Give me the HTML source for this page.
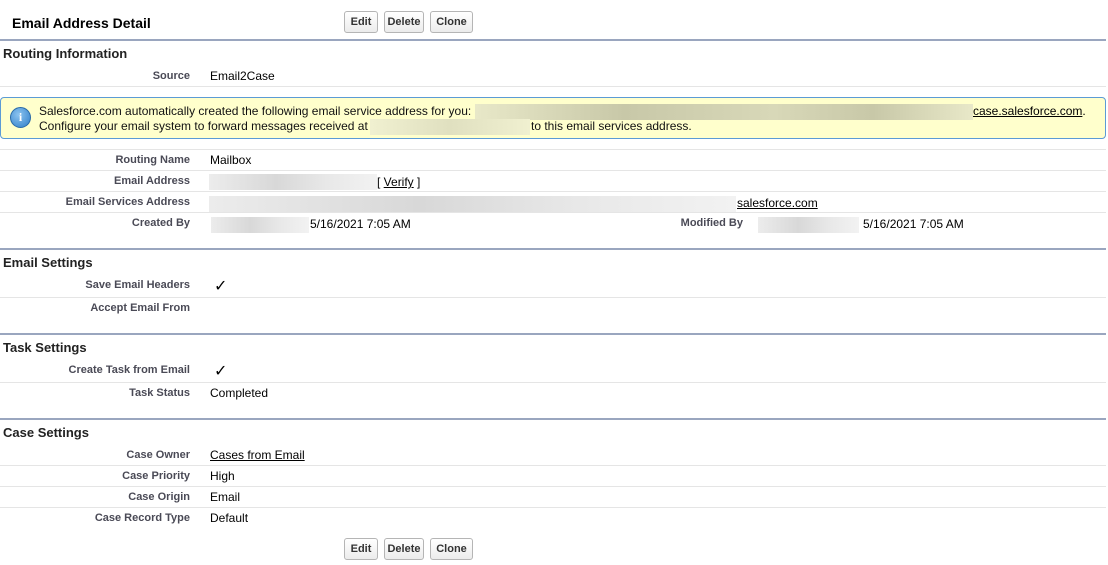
<!DOCTYPE html>
<html><head><style>
*{margin:0;padding:0;box-sizing:border-box}
body{width:1108px;height:565px;background:#fff;font-family:"Liberation Sans",Arial,sans-serif;position:relative;overflow:hidden;color:#000}
.a{position:absolute;white-space:nowrap;margin-top:1px}
.btn{position:absolute;height:22px;border:1px solid #b5b5b5;border-radius:3px;background:linear-gradient(#fff,#ececec);font-size:11px;font-weight:bold;color:#333;text-align:center;line-height:21px}
.hl{position:absolute;left:0;width:1106px;height:2px;background:#9aa6bf}
.sl{position:absolute;left:0;width:1106px;height:1px;background:#e5e5e5}
.sec{position:absolute;left:3px;font-size:13px;font-weight:bold;color:#222;margin-top:1px}
.lb{position:absolute;right:918px;font-size:11px;font-weight:bold;color:#4a4a56;text-align:right;white-space:nowrap;margin-top:1px}
.v{position:absolute;left:210px;font-size:12px;color:#000;white-space:nowrap;margin-top:1px}
.bl{position:absolute;height:16px;background:linear-gradient(90deg,#ececec,#d8d8d8 40%,#e8e8e8 70%,#f2f2f2)}
u{text-decoration:underline}
</style></head><body>
<div class="a" style="left:12px;top:14px;font-size:14px;font-weight:bold">Email Address Detail</div>
<div class="btn" style="left:344px;top:11px;width:34px">Edit</div>
<div class="btn" style="left:384px;top:11px;width:40px">Delete</div>
<div class="btn" style="left:430px;top:11px;width:43px">Clone</div>
<div class="hl" style="top:39px"></div>
<div class="sec" style="top:45px">Routing Information</div>
<div class="lb" style="top:69px">Source</div><div class="v" style="top:68px">Email2Case</div>
<div class="sl" style="top:86px"></div>
<div style="position:absolute;left:0;top:97px;width:1106px;height:42px;background:#ffffcc;border:1px solid #5b9bd5;border-radius:4px"></div>
<div style="position:absolute;left:10px;top:107px;width:21px;height:21px;border-radius:50%;background:radial-gradient(circle at 40% 35%,#8cc4f0,#2f7dc8);border:1px solid #2a6aa8;color:#fff;font:bold 12px 'Liberation Serif',serif;text-align:center;line-height:19px">i</div>
<div class="a" style="left:39px;top:103px;font-size:12px;color:#111">Salesforce.com automatically created the following email service address for you: </div>
<div class="bl" style="left:475px;top:104px;width:498px;background:linear-gradient(90deg,#e8e8c8,#c8c8a8 30%,#d8d8b8 60%,#c8c8a8 80%,#e8e8c8)"></div>
<div class="a" style="left:973px;top:103px;font-size:12px"><u>case.salesforce.com</u>.</div>
<div class="a" style="left:39px;top:118px;font-size:12px;color:#111">Configure your email system to forward messages received at</div>
<div class="bl" style="left:370px;top:119px;width:160px;background:linear-gradient(90deg,#f0f0d0,#e0e0c0,#f0f0d0)"></div>
<div class="a" style="left:531px;top:118px;font-size:12px;color:#111">to this email services address.</div>
<div class="sl" style="top:149px"></div>
<div class="lb" style="top:153px">Routing Name</div><div class="v" style="top:152px">Mailbox</div>
<div class="sl" style="top:170px"></div>
<div class="lb" style="top:174px">Email Address</div><div class="bl" style="left:209px;top:174px;width:168px"></div><div class="v" style="left:377px;top:174px">[ <u>Verify</u> ]</div>
<div class="sl" style="top:191px"></div>
<div class="lb" style="top:195px">Email Services Address</div><div class="bl" style="left:209px;top:196px;width:527px"></div><div class="v" style="left:737px;top:195px"><u>salesforce.com</u></div>
<div class="sl" style="top:212px"></div>
<div class="lb" style="top:216px">Created By</div><div class="bl" style="left:211px;top:217px;width:98px"></div><div class="v" style="left:310px;top:216px">5/16/2021 7:05 AM</div>
<div class="lb" style="top:216px;right:365px">Modified By</div><div class="bl" style="left:758px;top:217px;width:101px"></div><div class="v" style="left:863px;top:216px">5/16/2021 7:05 AM</div>
<div class="hl" style="top:248px"></div>
<div class="sec" style="top:254px">Email Settings</div>
<div class="lb" style="top:278px">Save Email Headers</div><div class="v" style="left:214px;top:275px;font-size:16px">✓</div>
<div class="sl" style="top:297px"></div>
<div class="lb" style="top:301px">Accept Email From</div>
<div class="hl" style="top:333px"></div>
<div class="sec" style="top:339px">Task Settings</div>
<div class="lb" style="top:363px">Create Task from Email</div><div class="v" style="left:214px;top:360px;font-size:16px">✓</div>
<div class="sl" style="top:382px"></div>
<div class="lb" style="top:386px">Task Status</div><div class="v" style="top:385px">Completed</div>
<div class="hl" style="top:418px"></div>
<div class="sec" style="top:424px">Case Settings</div>
<div class="lb" style="top:448px">Case Owner</div><div class="v" style="top:447px"><u>Cases from Email</u></div>
<div class="sl" style="top:465px"></div>
<div class="lb" style="top:469px">Case Priority</div><div class="v" style="top:468px">High</div>
<div class="sl" style="top:486px"></div>
<div class="lb" style="top:490px">Case Origin</div><div class="v" style="top:489px">Email</div>
<div class="sl" style="top:507px"></div>
<div class="lb" style="top:511px">Case Record Type</div><div class="v" style="top:510px">Default</div>
<div class="btn" style="left:344px;top:538px;width:34px">Edit</div>
<div class="btn" style="left:384px;top:538px;width:40px">Delete</div>
<div class="btn" style="left:430px;top:538px;width:43px">Clone</div>
</body></html>
